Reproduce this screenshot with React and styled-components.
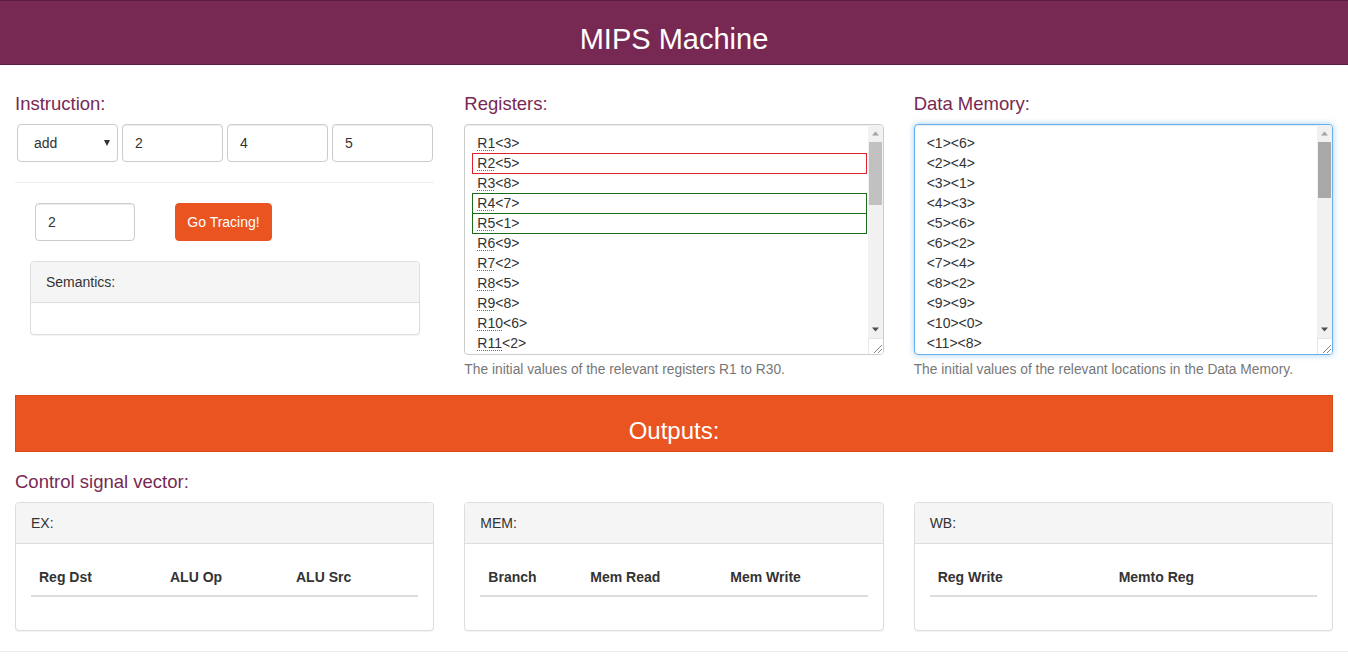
import React from 'react'
import styled, { createGlobalStyle, css } from 'styled-components'

const GlobalStyle = createGlobalStyle`
    * { box-sizing: border-box; }
    body {
        margin: 0;
        font-family: "Liberation Sans", Arial, sans-serif;
        font-size: 14px;
        line-height: 20px;
        color: #333;
        background: #fff;
    }
`

const registers = [3, 5, 8, 7, 1, 9, 2, 5, 8, 6, 2, 4, 7, 1, 3, 9, 0, 6, 5, 2, 8, 4, 1, 7, 3, 6, 9, 2, 5, 0]
const memory = [6, 4, 1, 3, 6, 2, 4, 2, 9, 0, 8, 5, 7, 1, 3, 2, 6, 4, 9, 0, 1, 5, 8, 3, 7, 2, 6, 4, 1, 9, 3, 5, 0, 2, 8, 7, 4, 6, 1, 3]

// which register lines get a box drawn round them
const marks = { 1: 'red', 3: 'green', 4: 'green' }

function Scrollbar({ thumb, dark }) {
    return (
        <Rail>
            <Arrow>
                <svg width="15" height="17" viewBox="0 0 15 17"><path d="M4 10.5 L7.5 6.5 L11 10.5 Z" fill="#a3a3a3" /></svg>
            </Arrow>
            <Track>
                <Thumb $h={thumb} $dark={dark} />
            </Track>
            <Arrow>
                <svg width="15" height="17" viewBox="0 0 15 17"><path d="M4 6.5 L7.5 10.5 L11 6.5 Z" fill="#505050" /></svg>
            </Arrow>
            <Corner>
                <svg width="15" height="16" viewBox="0 0 15 16">
                    <path d="M5 14 L13 6 M9 14 L13 10" stroke="#888" strokeWidth="1" />
                </svg>
            </Corner>
        </Rail>
    )
}

function App() {
    return (
        <>
            <GlobalStyle />
            <Header>MIPS Machine</Header>
            <Page>
                <Row>
                    <Column>
                        <Label>Instruction:</Label>
                        <InstrRow>
                            <SelectWrap>
                                <Select defaultValue="add">
                                    <option>add</option>
                                    <option>sub</option>
                                    <option>lw</option>
                                    <option>sw</option>
                                </Select>
                            </SelectWrap>
                            <Input defaultValue="2" />
                            <Input defaultValue="4" />
                            <Input defaultValue="5" />
                        </InstrRow>
                        <Rule />
                        <TraceRow>
                            <Input defaultValue="2" $width="100px" />
                            <TraceButton>Go Tracing!</TraceButton>
                        </TraceRow>
                        <Panel $inset>
                            <PanelHead>Semantics:</PanelHead>
                            <PanelBody />
                        </Panel>
                    </Column>

                    <Column>
                        <Label>Registers:</Label>
                        <ListBox>
                            <ListContent>
                                {registers.map((v, i) => (
                                    <Line key={i} $mark={marks[i]}>
                                        <Word>R{i + 1}</Word>&lt;{v}&gt;
                                    </Line>
                                ))}
                            </ListContent>
                            <Scrollbar thumb={63} />
                        </ListBox>
                        <Help>The initial values of the relevant registers R1 to R30.</Help>
                    </Column>

                    <Column>
                        <Label>Data Memory:</Label>
                        <ListBox $focused>
                            <ListContent>
                                {memory.map((v, i) => (
                                    <Line key={i}>&lt;{i + 1}&gt;&lt;{v}&gt;</Line>
                                ))}
                            </ListContent>
                            <Scrollbar thumb={56} dark />
                        </ListBox>
                        <Help>The initial values of the relevant locations in the Data Memory.</Help>
                    </Column>
                </Row>

                <OutputsBar>Outputs:</OutputsBar>

                <Label $top="19px">Control signal vector:</Label>
                <Row>
                    <Column>
                        <Panel>
                            <PanelHead>EX:</PanelHead>
                            <PanelBody>
                                <SignalTable>
                                    <thead>
                                        <tr><th style={{ width: '131px' }}>Reg Dst</th><th style={{ width: '126px' }}>ALU Op</th><th>ALU Src</th></tr>
                                    </thead>
                                </SignalTable>
                            </PanelBody>
                        </Panel>
                    </Column>
                    <Column>
                        <Panel>
                            <PanelHead>MEM:</PanelHead>
                            <PanelBody>
                                <SignalTable>
                                    <thead>
                                        <tr><th style={{ width: '102px' }}>Branch</th><th style={{ width: '140px' }}>Mem Read</th><th>Mem Write</th></tr>
                                    </thead>
                                </SignalTable>
                            </PanelBody>
                        </Panel>
                    </Column>
                    <Column>
                        <Panel>
                            <PanelHead>WB:</PanelHead>
                            <PanelBody>
                                <SignalTable>
                                    <thead>
                                        <tr><th style={{ width: '181px' }}>Reg Write</th><th>Memto Reg</th></tr>
                                    </thead>
                                </SignalTable>
                            </PanelBody>
                        </Panel>
                    </Column>
                </Row>
            </Page>
            <Footer />
        </>
    )
}

export default App

const Header = styled.header`
    height: 65px;
    background: #772953;
    border-bottom: 1px solid #5a1f3f;
    border-top: 1px solid #5a1f3f;
    color: #fff;
    font-size: 29px;
    display: flex;
    align-items: center;
    justify-content: center;
    padding-top: 12px;
`
const Page = styled.div`
    padding: 0 15px;
`
const Row = styled.div`
    display: grid;
    grid-template-columns: 1fr 1fr 1fr;
    column-gap: 30px;
`
const Column = styled.div`
    min-width: 0;
`
const Label = styled.div`
    color: #772953;
    font-size: 18.5px;
    line-height: 22px;
    margin-top: ${p => p.$top || '28px'};
    margin-bottom: 9px;
`
const InstrRow = styled.div`
    display: grid;
    grid-template-columns: repeat(4, 101px);
    column-gap: 4px;
    margin-left: 2px;
`
const fieldBase = css`
    height: 38px;
    border: 1px solid #ccc;
    border-radius: 4px;
    background: #fff;
    font-family: inherit;
    font-size: 14px;
    color: #333;
    padding: 8px 12px;
    outline: none;
`
const Input = styled.input`
    ${fieldBase}
    width: ${p => p.$width || '100%'};
    box-shadow: inset 0 1px 1px rgba(0,0,0,0.075);
`
const SelectWrap = styled.div`
    position: relative;
    &::after {
        content: '';
        position: absolute;
        right: 8px;
        top: 16px;
        border-left: 3.5px solid transparent;
        border-right: 3.5px solid transparent;
        border-top: 6px solid #333;
    }
`
const Select = styled.select`
    ${fieldBase}
    width: 100%;
    appearance: none;
    padding-left: 16px;
`
const Rule = styled.hr`
    border: 0;
    border-top: 1px solid #eee;
    margin: 20px 0 20px;
    height: 0;
`
const TraceRow = styled.div`
    display: flex;
    gap: 40px;
    padding-left: 20px;
`
const TraceButton = styled.button`
    height: 38px;
    width: 97px;
    padding: 8px 0;
    background: #e95420;
    border: 1px solid #e95420;
    border-radius: 4px;
    color: #fff;
    font-family: inherit;
    font-size: 14px;
    cursor: pointer;
`
const Panel = styled.div`
    border: 1px solid #ddd;
    border-radius: 4px;
    background: #fff;
    box-shadow: 0 1px 1px rgba(0,0,0,0.05);
    margin: ${p => (p.$inset ? '20px 14px 0 15px' : '0')};
    overflow: hidden;
`
const PanelHead = styled.div`
    background: #f5f5f5;
    border-bottom: 1px solid #ddd;
    padding: 10px 15px;
    height: 41px;
`
const PanelBody = styled.div`
    padding: 15px;
    min-height: 31px;
`
const ListBox = styled.div`
    display: flex;
    height: 231px;
    border: 1px solid ${p => (p.$focused ? '#66afe9' : '#ccc')};
    border-radius: 4px;
    box-shadow: ${p => (p.$focused
        ? 'inset 0 1px 1px rgba(0,0,0,.075), 0 0 6px rgba(102,175,233,.6)'
        : 'inset 0 1px 1px rgba(0,0,0,.075)')};
    overflow: hidden;
    background: #fff;
`
const ListContent = styled.div`
    flex: 1;
    min-width: 0;
    padding: 8px 1px 0 12px;
    overflow: hidden;
    font-size: 14px;
    line-height: 20px;
    color: #333;
`
const Rail = styled.div`
    width: 15px;
    flex: none;
    display: flex;
    flex-direction: column;
    background: #f1f1f1;
`
const Arrow = styled.div`
    height: 17px;
    flex: none;
    svg { display: block; }
`
const Track = styled.div`
    flex: 1;
`
const Thumb = styled.div`
    height: ${p => p.$h}px;
    margin: 0 1px 0 1px;
    background: ${p => (p.$dark ? '#a8a8a8' : '#c1c1c1')};
`
const Corner = styled.div`
    height: 16px;
    flex: none;
    background: #fff;
    border-top: 1px solid #e6e6e6;
    border-left: 1px solid #e6e6e6;
    svg { display: block; }
`
const Line = styled.div`
    position: relative;
    height: 20px;
    white-space: nowrap;
    ${p => p.$mark && css`
        &::after {
            content: '';
            position: absolute;
            left: -5px;
            right: 0;
            top: 0;
            height: 19px;
            border: 1px solid ${p.$mark === 'red' ? '#e0202a' : '#1c6b1c'};
        }
    `}
`
const Word = styled.span`
    text-decoration: underline dotted #e23b3b;
    text-decoration-thickness: 1px;
    text-underline-offset: 2px;
`
const Help = styled.div`
    color: #777;
    font-size: 13.8px;
    margin-top: 5px;
`
const OutputsBar = styled.div`
    margin-top: 15px;
    height: 57px;
    background: #e95420;
    border: 1px solid #d94c1a;
    color: #fff;
    font-size: 24px;
    display: flex;
    align-items: center;
    justify-content: center;
    padding-top: 14px;
`
const SignalTable = styled.table`
    width: 100%;
    border-collapse: collapse;
    margin-bottom: 18px;
    th {
        text-align: left;
        font-weight: bold;
        padding: 8px;
        line-height: 20px;
        border-bottom: 2px solid #ddd;
    }
`
const Footer = styled.hr`
    border: 0;
    border-top: 1px solid #eee;
    margin: 20px 0 0;
    height: 0;
`
